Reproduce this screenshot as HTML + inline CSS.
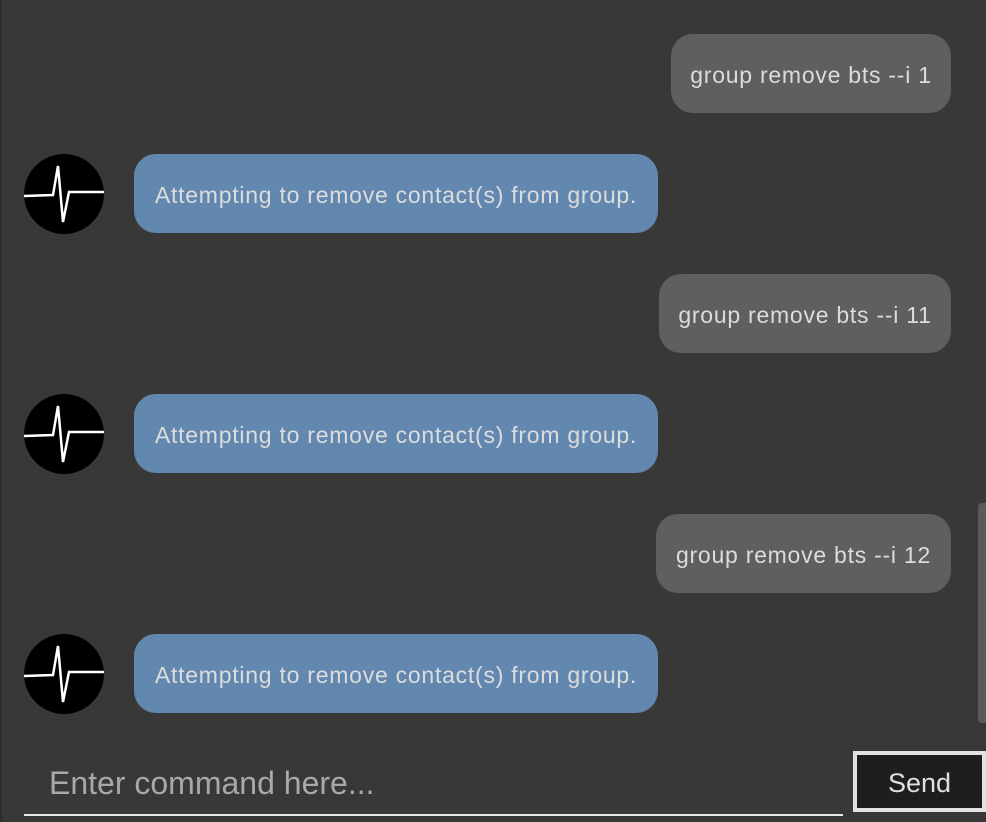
<!DOCTYPE html>
<html><head><style>
html,body{margin:0;padding:0;width:986px;height:822px;overflow:hidden;background:#383838;font-family:"Liberation Sans",sans-serif;}
.edge{position:absolute;left:0;top:0;width:2px;height:822px;background:#2e2e2e;}
.b{position:absolute;height:79px;border-radius:22px;color:#dcdcdc;font-size:23px;line-height:82px;text-align:center;white-space:nowrap;letter-spacing:0.75px;}
.u{background:#5f5f5f;}
.r{background:#6388b0;left:134px;width:524px;}
.av{position:absolute;left:24px;width:80px;height:80px;}
.sb{position:absolute;left:978px;top:503px;width:8px;height:220px;background:#5a5a5a;border-radius:4px 0 0 4px;}
.in{position:absolute;left:24px;top:750px;width:819px;height:66px;border-bottom:2px solid #e8e8e8;color:#a8a8a8;font-size:32px;line-height:66px;padding-left:25px;box-sizing:border-box;}
.send{position:absolute;left:853px;top:751px;width:133px;height:61px;box-sizing:border-box;border:4px solid #e2e2e2;background:#1e1e1e;color:#e0e0e0;font-size:27px;line-height:56px;text-align:center;}
</style></head><body>
<div class="edge"></div>
<div class="b u" style="left:671px;width:280px;top:34px">group remove bts --i 1</div>
<div class="b u" style="left:659px;width:292px;top:274px">group remove bts --i 11</div>
<div class="b u" style="left:656px;width:295px;top:514px">group remove bts --i 12</div>
<div class="b r" style="top:154px">Attempting to remove contact(s) from group.</div>
<div class="b r" style="top:394px">Attempting to remove contact(s) from group.</div>
<div class="b r" style="top:634px">Attempting to remove contact(s) from group.</div>
<svg class="av" style="top:154px" viewBox="0 0 80 80"><circle cx="40" cy="40" r="40" fill="#000"/><polyline points="0,42 29,41 34,12 39,68 45,38 80,38" fill="none" stroke="#fff" stroke-width="2.5"/></svg>
<svg class="av" style="top:394px" viewBox="0 0 80 80"><circle cx="40" cy="40" r="40" fill="#000"/><polyline points="0,42 29,41 34,12 39,68 45,38 80,38" fill="none" stroke="#fff" stroke-width="2.5"/></svg>
<svg class="av" style="top:634px" viewBox="0 0 80 80"><circle cx="40" cy="40" r="40" fill="#000"/><polyline points="0,42 29,41 34,12 39,68 45,38 80,38" fill="none" stroke="#fff" stroke-width="2.5"/></svg>
<div class="sb"></div>
<div class="in">Enter command here...</div>
<div class="send">Send</div>
</body></html>
